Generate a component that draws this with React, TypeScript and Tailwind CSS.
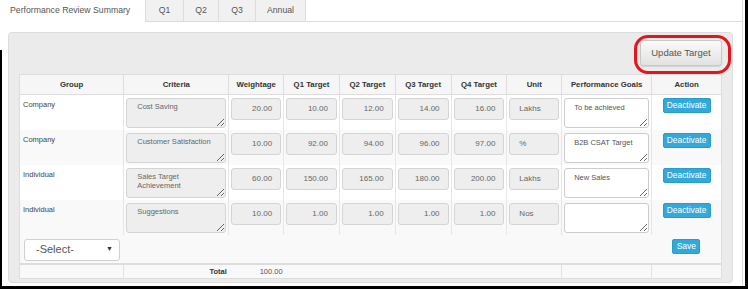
import React from "react";

type Row = {
  group: string;
  criteria: string;
  weight: string;
  targets: string[];
  unit: string;
  goal: string;
};

const rows: Row[] = [
  { group: "Company", criteria: "Cost Saving", weight: "20.00", targets: ["10.00", "12.00", "14.00", "16.00"], unit: "Lakhs", goal: "To be achieved" },
  { group: "Company", criteria: "Customer Satisfaction", weight: "10.00", targets: ["92.00", "94.00", "96.00", "97.00"], unit: "%", goal: "B2B CSAT Target" },
  { group: "Individual", criteria: "Sales Target Achievement", weight: "60.00", targets: ["150.00", "165.00", "180.00", "200.00"], unit: "Lakhs", goal: "New Sales" },
  { group: "Individual", criteria: "Suggestions", weight: "10.00", targets: ["1.00", "1.00", "1.00", "1.00"], unit: "Nos", goal: "" },
];

const headers = ["Group", "Criteria", "Weightage", "Q1 Target", "Q2 Target", "Q3 Target", "Q4 Target", "Unit", "Performance Goals", "Action"];
const widths = [105, 104, 55, 56, 56, 56, 56, 55, 90, 70];

function NumBox({ value }: { value: string }) {
  return (
    <div className="h-[22px] rounded-[3px] border border-[#d4d4d4] bg-[#eeeeee] pr-[8px] text-right text-[8px] leading-[20px] text-[#666]">
      {value}
    </div>
  );
}

export default function App() {
  return (
    <div className="relative h-[289px] w-[748px] overflow-hidden border-b-[3px] border-r-[3px] border-black bg-white font-['Liberation_Sans',Arial,sans-serif]">
      <span className="absolute bottom-0 left-0 top-[50px] w-[2px] bg-black" />
      <div className="mr-[2px] h-full border-r border-[#dddddd]">
        {/* tabs */}
        <div className="flex h-[22px] text-[8.7px] text-[#555]">
          <div className="flex w-[145px] items-center bg-white pl-[10px]">Performance Review Summary</div>
          {[
            ["Q1", 38],
            ["Q2", 35],
            ["Q3", 37],
            ["Annual", 50],
          ].map(([t, w]) => (
            <div
              key={t as string}
              className="flex items-center justify-center border-b border-l border-[#dddddd] bg-[#f1f1f1]"
              style={{ width: w as number }}
            >
              {t}
            </div>
          ))}
          <div className="flex-1 border-b border-l border-[#dddddd]" />
        </div>

        <div className="pl-[8px] pr-[9px] pt-[10px]">
          <div className="rounded-[4px] border border-[#dcdcdc] bg-[#ebebeb] px-[10px] pb-[3px] pt-[6px]">
            <div className="mb-[8px] flex justify-end">
              <div className="relative">
                <button className="h-[26px] w-[82px] rounded-[3px] border border-[#c8c8c8] bg-gradient-to-b from-[#fafafa] to-[#e2e2e2] text-[9.5px] text-[#555] shadow-[0_1px_1px_rgba(0,0,0,0.1)]">
                  Update Target
                </button>
                <span className="absolute -bottom-[8px] -left-[6px] -right-[9px] -top-[4px] rounded-[14px] border-[3px] border-[#e8141b]" />
              </div>
            </div>

            <table className="table-fixed border-collapse border border-[#dddddd] text-[7.5px] text-[#444]">
              <colgroup>
                {widths.map((w, i) => (
                  <col key={i} style={{ width: w }} />
                ))}
              </colgroup>
              <thead>
                <tr className="h-[20px] bg-[#f6f6f6]">
                  {headers.map((h) => (
                    <th key={h} className="border border-[#dddddd] p-0 text-center text-[7.8px] font-bold text-[#333]">
                      {h}
                    </th>
                  ))}
                </tr>
              </thead>
              <tbody>
                {rows.map((r, i) => (
                  <tr key={i} className={`h-[35px] align-top ${i % 2 ? "bg-[#f9f9f9]" : "bg-white"}`}>
                    <td className="border-r border-[#e6e6e6] px-[3px] pt-[5px] leading-[9px]">{r.group}</td>
                    <td className="border-r border-[#e6e6e6] px-[2px] pt-[3px]">
                      <textarea
                        readOnly
                        value={r.criteria}
                        className="block h-[30px] w-[100px] rounded-[3px] border border-[#d4d4d4] bg-[#eeeeee] pl-[10px] pr-[4px] pt-[3px] text-[7.5px] leading-[9px] text-[#666] outline-none"
                      />
                    </td>
                    <td className="border-r border-[#e6e6e6] px-[2px] pt-[3px]">
                      <NumBox value={r.weight} />
                    </td>
                    {r.targets.map((t, j) => (
                      <td key={j} className="border-r border-[#e6e6e6] px-[2px] pt-[3px]">
                        <NumBox value={t} />
                      </td>
                    ))}
                    <td className="border-r border-[#e6e6e6] px-[2px] pt-[3px]">
                      <div className="h-[22px] rounded-[3px] border border-[#d4d4d4] bg-[#eeeeee] pl-[9px] text-[8px] leading-[20px] text-[#666]">
                        {r.unit}
                      </div>
                    </td>
                    <td className="border-r border-[#e6e6e6] px-[2px] pt-[3px]">
                      <textarea
                        readOnly
                        value={r.goal}
                        className="block h-[30px] w-[85px] rounded-[3px] border border-[#cccccc] bg-white pl-[9px] pr-[3px] pt-[4px] text-[7.5px] leading-[9px] text-[#555] outline-none"
                      />
                    </td>
                    <td className="pt-[3px] text-center">
                      <button className="h-[15px] w-[48px] rounded-[2px] border border-[#2a9cc9] bg-[#33a9d9] text-[8.4px] leading-[13px] text-white">
                        Deactivate
                      </button>
                    </td>
                  </tr>
                ))}
                <tr className="h-[29px] bg-[#f9f9f9] align-top">
                  <td colSpan={9} className="pl-[4px] pt-[4px]">
                    <div className="flex h-[22px] w-[96px] items-center justify-between rounded-[3px] border border-[#d0d0d0] bg-white pl-[11px] pr-[6px] text-[11px] text-[#555]">
                      <span>-Select-</span>
                      <span className="text-[7px] text-[#333]">▼</span>
                    </div>
                  </td>
                  <td className="pt-[4px] text-center">
                    <button className="h-[15px] w-[28px] rounded-[2px] border border-[#2a9cc9] bg-[#33a9d9] text-[8.5px] leading-[13px] text-white">
                      Save
                    </button>
                  </td>
                </tr>
                <tr className="h-[15px] border-t-2 border-[#dddddd] bg-[#f9f9f9] text-[7.5px]">
                  <td className="border-r border-[#e2e2e2]" />
                  <td className="pr-[2px] text-right font-bold text-[#333]">Total</td>
                  <td className="pr-[1px] text-right text-[#555]">100.00</td>
                  <td colSpan={5} />
                  <td className="border-l border-r border-[#e2e2e2]" />
                  <td />
                </tr>
              </tbody>
            </table>
          </div>
        </div>
      </div>
    </div>
  );
}
